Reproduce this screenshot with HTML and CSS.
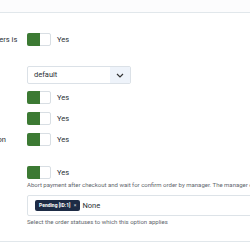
FILE: index.html
```html
<!DOCTYPE html>
<html lang="en">
<head>
  <meta charset="UTF-8">
  <title>Payment settings</title>
  <link rel="stylesheet" href="styles.css">
</head>
<body>
  <div class="topbar"></div>

  <div class="form">
    <div class="row spaced">
      <label class="label">Shipping for customers is</label>
      <div class="control">
        <span class="switch"><span class="switch-on"></span></span>
        <span class="switch-text">Yes</span>
      </div>
    </div>

    <div class="row select-row">
      <label class="label"></label>
      <div class="control">
        <div class="select">
          <span class="select-value">default</span>
          <span class="select-arrow">
            <svg width="8" height="5" viewBox="0 0 8 5"><path d="M1 1l3 3 3-3" fill="none" stroke="#333" stroke-width="1.2"/></svg>
          </span>
        </div>
      </div>
    </div>

    <div class="row">
      <label class="label"></label>
      <div class="control">
        <span class="switch"><span class="switch-on"></span></span>
        <span class="switch-text">Yes</span>
      </div>
    </div>

    <div class="row">
      <label class="label"></label>
      <div class="control">
        <span class="switch"><span class="switch-on"></span></span>
        <span class="switch-text">Yes</span>
      </div>
    </div>

    <div class="row spaced">
      <label class="label">Manager confirmation</label>
      <div class="control">
        <span class="switch"><span class="switch-on"></span></span>
        <span class="switch-text">Yes</span>
      </div>
    </div>

    <div class="row">
      <label class="label"></label>
      <div class="field">
        <div class="control">
          <span class="switch"><span class="switch-on"></span></span>
          <span class="switch-text">Yes</span>
        </div>
        <p class="help">Abort payment after checkout and wait for confirm order by manager. The manager can confirm</p>

        <div class="multi">
          <span class="chip">Pending [ID:1] <span class="chip-x">×</span></span>
          <span class="multi-text">None</span>
        </div>
        <p class="help">Select the order statuses to which this option applies</p>
      </div>
    </div>
  </div>

  <div class="bottom-line"></div>
</body>
</html>
```

FILE: styles.css
```css
body {
  margin: 0;
  font-family: Roboto, sans-serif;
  color: #2b3035;
  background-color: #fff;
  overflow: hidden;
  width: 250px;
}

.topbar {
  height: 12px;
  background-color: #fcfcfd;
  border-bottom: 1px solid #e1e7eb;
}

.form {
  margin-left: -68px;
  padding-top: 20px;
}

.row {
  display: grid;
  grid-template-columns: 95px 1fr;
  align-items: start;
  margin-bottom: 8px;
}

.row.spaced {
  margin-bottom: 20px;
}

.row.select-row {
  margin-bottom: 7px;
}

.label {
  font-size: 7.5px;
  line-height: 13px;
  white-space: nowrap;
}

.control {
  display: flex;
  align-items: center;
}

.switch {
  display: flex;
  width: 24px;
  height: 13px;
  box-sizing: border-box;
  border: 1px solid #d8dee3;
  border-radius: 2px;
  background-color: #fff;
}

.switch-on {
  width: 13px;
  margin: -1px 0 -1px -1px;
  background-color: #3c7a33;
  border-radius: 2px 0 0 2px;
}

.switch-text {
  font-size: 7.5px;
  margin-left: 6px;
}

.select {
  display: flex;
  width: 104px;
  height: 18px;
  box-sizing: border-box;
  border: 1px solid #dbe1e7;
  border-radius: 2px;
}

.select-value {
  flex: 1;
  font-size: 7.5px;
  line-height: 16px;
  padding-left: 6px;
}

.select-arrow {
  width: 20px;
  display: flex;
  align-items: center;
  justify-content: center;
  background-color: #eef3fa;
}

.help {
  margin: 1px 0 0;
  font-size: 6px;
  line-height: 9px;
  color: #5f676e;
  white-space: nowrap;
}

.multi {
  display: flex;
  align-items: center;
  width: 260px;
  height: 21px;
  box-sizing: border-box;
  margin-top: 6px;
  padding-left: 7px;
  border: 1px solid #dde3e8;
  border-radius: 2px;
}

.chip {
  background-color: #1d2b45;
  color: #fff;
  font-size: 5px;
  font-weight: 700;
  height: 11px;
  line-height: 11px;
  padding: 0 4px;
  border-radius: 2px;
}

.chip-x {
  font-weight: 400;
  color: #c9d0da;
  margin-left: 2px;
}

.multi-text {
  font-size: 7.5px;
  margin-left: 2px;
}

.bottom-line {
  margin-top: 15px;
  border-top: 1px solid #e1e7eb;
}
```
